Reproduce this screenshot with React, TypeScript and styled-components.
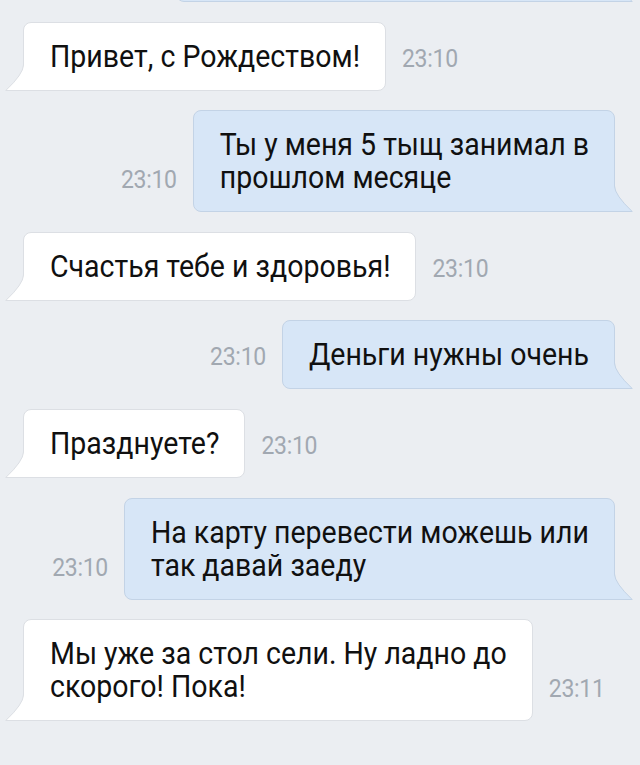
import styled, { createGlobalStyle } from 'styled-components'

const GlobalStyle = createGlobalStyle`
  html, body {
    margin: 0;
    padding: 0;
    background: #ebeef2;
  }
  body {
    font-family: Roboto, "Noto Sans", "Liberation Sans", sans-serif;
    -webkit-font-smoothing: antialiased;
  }
`;

const Screen = styled.div`
  width: 640px;
  height: 765px;
  overflow: hidden;
  background: #ebeef2;
`;

const List = styled.div`
  display: flex;
  flex-direction: column;
  gap: 19.6px;
  padding: 1px 25px 0 23px;
`;

const Row = styled.div<{ $out?: boolean }>`
  display: flex;
  align-items: last baseline;
  justify-content: ${props => (props.$out ? 'flex-end' : 'flex-start')};
  gap: 16px;
`;

const Bubble = styled.div<{ $out?: boolean }>`
  position: relative;
  padding: 17px 25px 17px 26px;
  font-size: 28.5px;
  line-height: 33px;
  color: #101010;
  background: ${props => (props.$out ? '#d7e6f7' : '#ffffff')};
  border: 1px solid ${props => (props.$out ? '#c3d3e6' : '#dcdfe4')};
  border-radius: 8px;
  ${props => (props.$out ? 'border-bottom-right-radius: 0;' : 'border-bottom-left-radius: 0;')}
  white-space: nowrap;
`;

const Cut = styled(Bubble)`
  height: 66px;
  padding: 0;
  margin: -67px 0 0 0;
  width: 437px;
`;

// the source shot is a bit stretched upward, so the glyphs are taller than Roboto's
const Tall = styled.span`
  display: inline-block;
  transform: scaleY(1.1);
`;

const TailWrap = styled.svg<{ $out?: boolean }>`
  position: absolute;
  bottom: -1px;
  ${props => (props.$out ? 'right: -19px; transform: scaleX(-1);' : 'left: -19px;')}
  width: 20px;
  height: 26px;
  overflow: visible;
`;

const Time = styled.span`
  font-size: 23px;
  color: #a1a8b1;
  letter-spacing: -0.3px;
`;

const Tail = ({ out }: { out?: boolean }) => (
  <TailWrap $out={out} viewBox="0 0 20 26">
    <path
      d="M18.5 0 Q18.3 9 0.8 25.5 H20 V0 Z"
      fill={out ? '#d7e6f7' : '#ffffff'}
    />
    <path
      d="M18.5 0 Q18.3 9 0.8 25.5 H20"
      fill="none"
      stroke={out ? '#c3d3e6' : '#dcdfe4'}
      strokeWidth="1"
    />
  </TailWrap>
);

type Msg = { out?: boolean; lines: string[]; time: string };

const messages: Msg[] = [
  { lines: ['Привет, с Рождеством!'], time: '23:10' },
  { out: true, lines: ['Ты у меня 5 тыщ занимал в', 'прошлом месяце'], time: '23:10' },
  { lines: ['Счастья тебе и здоровья!'], time: '23:10' },
  { out: true, lines: ['Деньги нужны очень'], time: '23:10' },
  { lines: ['Празднуете?'], time: '23:10' },
  { out: true, lines: ['На карту перевести можешь или', 'так давай заеду'], time: '23:10' },
  { lines: ['Мы уже за стол сели. Ну ладно до', 'скорого! Пока!'], time: '23:11' },
];

const Message = ({ out, lines, time }: Msg) => (
  <Row $out={out}>
    {out && <Time><Tall>{time}</Tall></Time>}
    <Bubble $out={out}>
      {lines.map((l, i) => (
        <span key={i}>
          {i > 0 && <br />}
          <Tall>{l}</Tall>
        </span>
      ))}
      <Tail out={out} />
    </Bubble>
    {!out && <Time><Tall>{time}</Tall></Time>}
  </Row>
);

export default function App() {
  return (
    <Screen>
      <GlobalStyle />
      <List>
        <Row $out>
          <Cut $out>
            <Tail out />
          </Cut>
        </Row>
        {messages.map((m, i) => (
          <Message key={i} {...m} />
        ))}
      </List>
    </Screen>
  );
}
